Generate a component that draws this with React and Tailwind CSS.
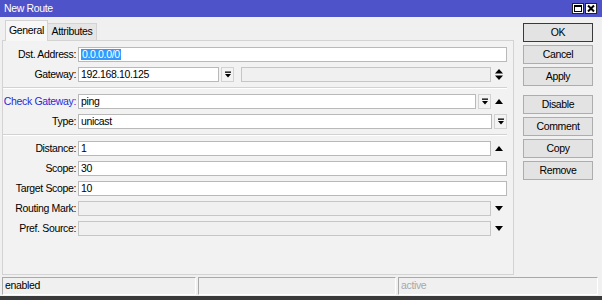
import React from "react";

const font = { fontFamily: '"Liberation Sans", Arial, sans-serif' };

function DropIcon() {
  return (
    <svg width="6" height="7" viewBox="0 0 6 7">
      <rect x="0" y="0.5" width="6" height="1.3" fill="#000" />
      <polygon points="0,3 6,3 3,6.5" fill="#000" />
    </svg>
  );
}

function UpDown() {
  return (
    <svg width="8" height="11" viewBox="0 0 8 11">
      <polygon points="4,0 8,4.5 0,4.5" fill="#000" />
      <polygon points="0,6.5 8,6.5 4,11" fill="#000" />
    </svg>
  );
}

function Up() {
  return (
    <svg width="8" height="5" viewBox="0 0 8 5">
      <polygon points="4,0 8,5 0,5" fill="#000" />
    </svg>
  );
}

function Down() {
  return (
    <svg width="8" height="5" viewBox="0 0 8 5">
      <polygon points="0,0 8,0 4,5" fill="#000" />
    </svg>
  );
}

function Box({ children, disabled, className = "" }) {
  return (
    <div className={`h-[15px] border flex items-center px-[2px] leading-none ${disabled ? "bg-[#f0f0f0] border-[#c6c6c6]" : "bg-white border-[#b9b9b9]"} ${className}`}>
      {children}
    </div>
  );
}

function DropBtn() {
  return (
    <div className="w-[13px] h-[15px] ml-[2px] shrink-0 border border-[#d2d2d2] bg-[#f3f3f3] flex items-center justify-center">
      <DropIcon />
    </div>
  );
}

function Row({ label, blue, children }) {
  return (
    <div className="flex items-center h-[15px]">
      <div className={`w-[73px] text-right whitespace-nowrap ${blue ? "text-[#2a2ad6]" : "text-black"}`}>{label}</div>
      <div className="ml-[2px] w-[429px] flex items-center">{children}</div>
    </div>
  );
}

function Slot({ children }) {
  return <div className="w-[16px] shrink-0 flex items-center justify-center">{children}</div>;
}

function Sep() {
  return <div className="w-[504px] h-[2px] border-t border-[#d2d2d2] border-b border-b-white" />;
}

function Btn({ label, primary, className = "" }) {
  return (
    <div className={`h-[19px] w-[70px] flex items-center justify-center border ${primary ? "border-[#3a3a3a]" : "border-[#adadad]"} bg-[#e3e3e3] text-black ${className}`}>
      {label}
    </div>
  );
}

export default function App() {
  return (
    <div style={font} className="w-[602px] h-[300px] bg-[#f0f0f0] flex flex-col text-[10.5px] tracking-[-0.35px] overflow-hidden">
      <div className="h-[17px] bg-[#4f53c9] flex items-center justify-between pl-[4px] pr-[5px]">
        <span className="text-white">New Route</span>
        <div className="flex gap-[1px]">
          <div className="w-[12px] h-[11px] bg-white border border-[#222] flex items-center justify-center">
            <div className="w-[8px] h-[7px] border border-black border-t-2" />
          </div>
          <div className="w-[12px] h-[11px] bg-white border border-[#222] flex items-center justify-center">
            <svg width="8" height="7" viewBox="0 0 8 7">
              <path d="M1 0.5 L7 6.5 M7 0.5 L1 6.5" stroke="#000" strokeWidth="2" />
            </svg>
          </div>
        </div>
      </div>

      <div className="flex flex-1">
        <div className="w-[514px] pl-[2px] flex flex-col">
          <div className="h-[23px] flex items-end pl-[3px]">
            <div className="h-[21px] w-[43px] -mb-px z-10 bg-[#f7f7f7] border border-b-0 border-[#d3d3d3] flex items-center justify-center text-black">
              General
            </div>
            <div className="h-[17px] w-[49px] bg-[#e6e6e6] border border-b-0 border-l-0 border-[#d3d3d3] flex items-center justify-center text-black">
              Attributes
            </div>
          </div>
          <div className="flex-1 bg-[#f2f2f2] border border-[#d3d3d3] pt-[6px] flex flex-col gap-[5px]">
            <Row label="Dst. Address:">
              <Box className="flex-1">
                <span className="bg-[#3399ff] text-white px-[1px]">0.0.0.0/0</span>
              </Box>
            </Row>
            <Row label="Gateway:">
              <Box className="w-[141px] shrink-0">192.168.10.125</Box>
              <DropBtn />
              <Box disabled className="ml-[7px] flex-1" />
              <Slot><UpDown /></Slot>
            </Row>
            <Sep />
            <Row label="Check Gateway:" blue>
              <Box className="flex-1">ping</Box>
              <DropBtn />
              <Slot><Up /></Slot>
            </Row>
            <Row label="Type:">
              <Box className="flex-1">unicast</Box>
              <DropBtn />
            </Row>
            <Sep />
            <Row label="Distance:">
              <Box className="flex-1">1</Box>
              <Slot><Up /></Slot>
            </Row>
            <Row label="Scope:">
              <Box className="flex-1">30</Box>
            </Row>
            <Row label="Target Scope:">
              <Box className="flex-1">10</Box>
            </Row>
            <Row label="Routing Mark:">
              <Box disabled className="flex-1" />
              <Slot><Down /></Slot>
            </Row>
            <Row label="Pref. Source:">
              <Box disabled className="flex-1" />
              <Slot><Down /></Slot>
            </Row>
          </div>
        </div>
        <div className="ml-[9px] pt-[6px] flex flex-col gap-[3px]">
          <Btn label="OK" primary />
          <Btn label="Cancel" />
          <Btn label="Apply" />
          <Btn label="Disable" className="mt-[6px]" />
          <Btn label="Comment" />
          <Btn label="Copy" />
          <Btn label="Remove" />
        </div>
      </div>

      <div className="h-[21px] pt-[2px] pb-[1px] pl-[2px] flex gap-[2px]">
        <div className="w-[194px] border border-[#a9a9a9] border-r-white border-b-white flex items-center pl-[2px] text-black">enabled</div>
        <div className="w-[198px] border border-[#a9a9a9] border-r-white border-b-white" />
        <div className="w-[200px] border border-[#a9a9a9] border-r-white border-b-white flex items-center pl-[2px] text-[#a8a8a8]">active</div>
      </div>
      <div className="h-[4px] bg-[#3a3a3a]" />
    </div>
  );
}
